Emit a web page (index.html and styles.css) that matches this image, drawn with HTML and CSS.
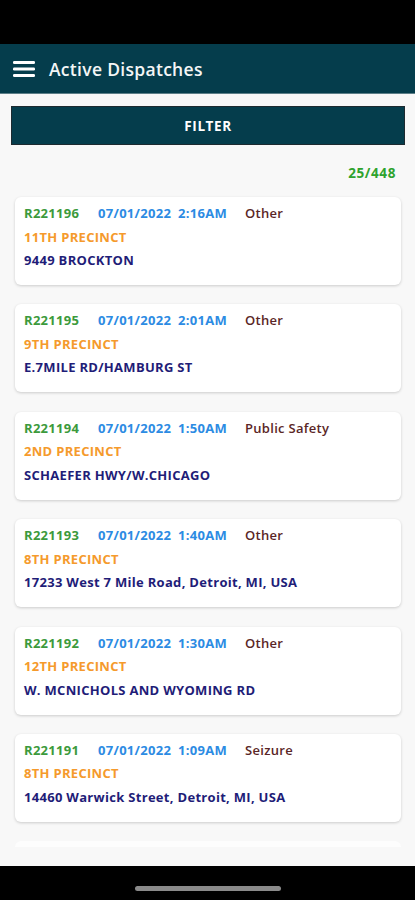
FILE: index.html
```html
<!DOCTYPE html>
<html lang="en">

<head>
    <meta charset="UTF-8">
    <meta name="viewport" content="width=device-width, initial-scale=1.0">
    <title>Active Dispatches</title>
    <link rel="stylesheet" href="styles.css">
</head>

<body>
    <div class="phone">
        <div class="status-bar"></div>

        <header class="app-bar">
            <svg class="menu-icon" width="22" height="18" viewBox="0 0 22 18">
                <rect x="0" y="1" width="22" height="3" rx="1.2" fill="#fff" />
                <rect x="0" y="7.5" width="22" height="3" rx="1.2" fill="#fff" />
                <rect x="0" y="14" width="22" height="3" rx="1.2" fill="#fff" />
            </svg>
            <h1>Active Dispatches</h1>
        </header>

        <main class="content">
            <button class="filter-btn">FILTER</button>
            <div class="count">25/448</div>

            <div class="dispatch-list">
                <div class="dispatch">
                    <div class="row">
                        <span class="id">R221196</span>
                        <span class="date">07/01/2022</span>
                        <span class="time">2:16AM</span>
                        <span class="type">Other</span>
                    </div>
                    <div class="precinct">11TH PRECINCT</div>
                    <div class="address">9449 BROCKTON</div>
                </div>

                <div class="dispatch">
                    <div class="row">
                        <span class="id">R221195</span>
                        <span class="date">07/01/2022</span>
                        <span class="time">2:01AM</span>
                        <span class="type">Other</span>
                    </div>
                    <div class="precinct">9TH PRECINCT</div>
                    <div class="address">E.7MILE RD/HAMBURG ST</div>
                </div>

                <div class="dispatch">
                    <div class="row">
                        <span class="id">R221194</span>
                        <span class="date">07/01/2022</span>
                        <span class="time">1:50AM</span>
                        <span class="type">Public Safety</span>
                    </div>
                    <div class="precinct">2ND PRECINCT</div>
                    <div class="address">SCHAEFER HWY/W.CHICAGO</div>
                </div>

                <div class="dispatch">
                    <div class="row">
                        <span class="id">R221193</span>
                        <span class="date">07/01/2022</span>
                        <span class="time">1:40AM</span>
                        <span class="type">Other</span>
                    </div>
                    <div class="precinct">8TH PRECINCT</div>
                    <div class="address">17233 West 7 Mile Road, Detroit, MI, USA</div>
                </div>

                <div class="dispatch">
                    <div class="row">
                        <span class="id">R221192</span>
                        <span class="date">07/01/2022</span>
                        <span class="time">1:30AM</span>
                        <span class="type">Other</span>
                    </div>
                    <div class="precinct">12TH PRECINCT</div>
                    <div class="address">W. MCNICHOLS AND WYOMING RD</div>
                </div>

                <div class="dispatch">
                    <div class="row">
                        <span class="id">R221191</span>
                        <span class="date">07/01/2022</span>
                        <span class="time">1:09AM</span>
                        <span class="type">Seizure</span>
                    </div>
                    <div class="precinct">8TH PRECINCT</div>
                    <div class="address">14460 Warwick Street, Detroit, MI, USA</div>
                </div>

                <!-- next card still loading -->
                <div class="dispatch-placeholder"></div>
            </div>
        </main>

        <div class="nav-bar">
            <div class="home-indicator"></div>
        </div>
    </div>
</body>

</html>
```

FILE: styles.css
```css
body {
    font-family: "Open Sans", Arial, sans-serif;
    background-color: #000;
    margin: 0;
    padding: 0;
}

.phone {
    width: 415px;
    height: 900px;
    display: flex;
    flex-direction: column;
    overflow: hidden;
}

.status-bar {
    height: 44px;
    background: #000;
    flex-shrink: 0;
}

.app-bar {
    height: 49px;
    background: #053d4c;
    border-bottom: 1px solid #5d7f88;
    display: flex;
    align-items: center;
    padding-left: 13px;
    gap: 14px;
    flex-shrink: 0;
}

.app-bar h1 {
    margin: 0;
    color: #f4f6f6;
    font-size: 17.5px;
    font-weight: 600;
    letter-spacing: 0.3px;
}

.content {
    flex: 1;
    background: #f8f8f8;
    overflow: hidden;
    padding: 12px 10px 0 11px;
}

.filter-btn {
    display: block;
    width: 100%;
    height: 39px;
    background: #053d4c;
    color: #fff;
    border: 1px solid #1d2a30;
    font-family: inherit;
    font-weight: 700;
    font-size: 13.5px;
    letter-spacing: 0.6px;
    cursor: pointer;
}

.count {
    text-align: right;
    color: #2ea32e;
    font-weight: 700;
    font-size: 13.5px;
    letter-spacing: 0.6px;
    padding: 19px 9px 0 0;
    height: 32px;
    box-sizing: border-box;
}

.dispatch-list {
    display: flex;
    flex-direction: column;
    gap: 19.4px;
    padding: 20px 4px 0 4px;
}

.dispatch {
    background: #fff;
    border-radius: 6px;
    box-shadow: 0 1px 3px rgba(0, 0, 0, 0.18);
    height: 88px;
    box-sizing: border-box;
    padding: 5px 9px 0;
    font-size: 13px;
    font-weight: 700;
    letter-spacing: 0.3px;
    line-height: 23.5px;
    flex-shrink: 0;
}

.dispatch-placeholder {
    height: 6px;
    background: #fdfdfd;
    border-radius: 6px 6px 0 0;
    flex-shrink: 0;
}

.row {
    display: flex;
}

.id {
    color: #3c9a3c;
    width: 74px;
}

.date {
    color: #2c8be3;
    width: 80px;
}

.time {
    color: #2c8be3;
    width: 67px;
}

.type {
    color: #5a2626;
    font-weight: 600;
}

.precinct {
    color: #f59a2c;
}

.address {
    color: #1f1d78;
}

.nav-bar {
    height: 34px;
    background: #000;
    display: flex;
    justify-content: center;
    padding-top: 20px;
    box-sizing: border-box;
    flex-shrink: 0;
}

.home-indicator {
    width: 146px;
    height: 5px;
    border-radius: 3px;
    background: #8a8a8a;
}
```
